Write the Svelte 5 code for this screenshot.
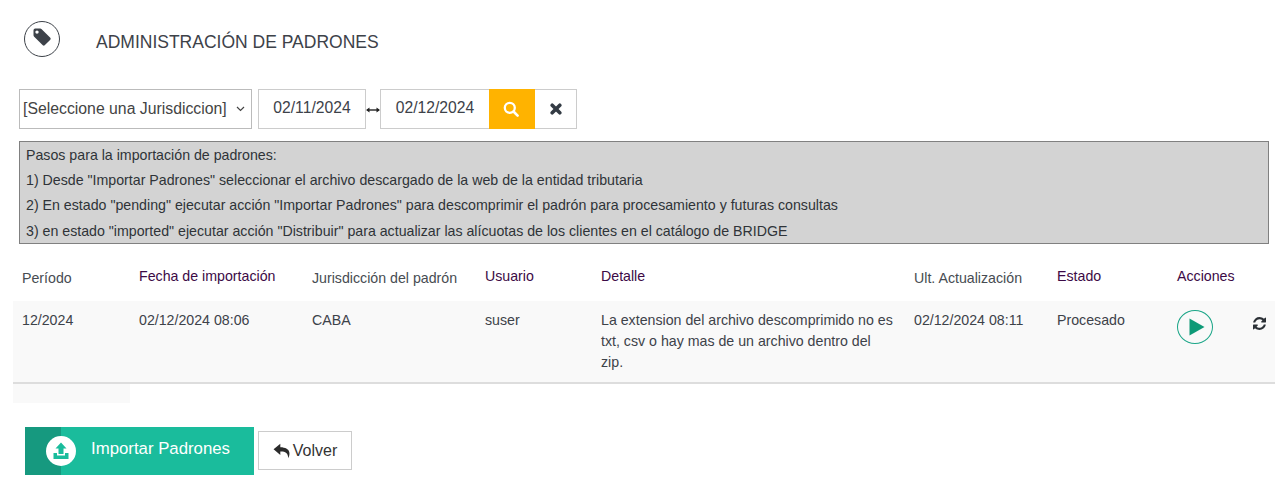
<script>
	const steps = [
		'Pasos para la importación de padrones:',
		'1) Desde "Importar Padrones" seleccionar el archivo descargado de la web de la entidad tributaria',
		'2) En estado "pending" ejecutar acción "Importar Padrones" para descomprimir el padrón para procesamiento y futuras consultas',
		'3) en estado "imported" ejecutar acción "Distribuir" para actualizar las alícuotas de los clientes en el catálogo de BRIDGE'
	];

	const columns = [
		{ label: 'Período' },
		{ label: 'Fecha de importación', link: true },
		{ label: 'Jurisdicción del padrón' },
		{ label: 'Usuario', link: true },
		{ label: 'Detalle', link: true },
		{ label: 'Ult. Actualización' },
		{ label: 'Estado', link: true },
		{ label: 'Acciones', link: true }
	];
</script>

<div class="page">
	<header class="title-bar">
		<span class="title-icon">
			<svg width="20" height="20" viewBox="0 0 20 20">
				<path d="M1.5 3.2 Q1.5 1.5 3.2 1.5 L8.2 1.5 Q9 1.5 9.7 2.2 L18.3 10.8 Q19.2 11.8 18.3 12.7 L12.7 18.3 Q11.8 19.2 10.8 18.3 L2.2 9.7 Q1.5 9 1.5 8.2 Z M5 3.4 A1.7 1.7 0 1 0 5 6.8 A1.7 1.7 0 1 0 5 3.4 Z" fill="#3d4249" fill-rule="evenodd" />
			</svg>
		</span>
		<h1>Administración de padrones</h1>
	</header>

	<div class="filters">
		<div class="select">
			<span>[Seleccione una Jurisdiccion]</span>
			<svg width="9" height="6" viewBox="0 0 9 6"><path d="M1 1 L4.5 4.5 L8 1" fill="none" stroke="#444" stroke-width="1.2" /></svg>
		</div>
		<div class="date first">02/11/2024</div>
		<svg class="range" width="14" height="6" viewBox="0 0 14 6"><path d="M1 3 H13" stroke="#222" stroke-width="1.4" /><path d="M0 3 L3.5 0.5 V5.5 Z M14 3 L10.5 0.5 V5.5 Z" fill="#222" /></svg>
		<div class="date second">02/12/2024</div>
		<button class="search" aria-label="Buscar">
			<svg width="16" height="16" viewBox="0 0 16 16"><circle cx="6.8" cy="6.8" r="5" fill="none" stroke="#fff" stroke-width="2.3" /><path d="M10.5 10.5 L14.6 14.6" stroke="#fff" stroke-width="2.6" stroke-linecap="round" /></svg>
		</button>
		<button class="clear" aria-label="Limpiar">
			<svg width="12" height="12" viewBox="0 0 12 12"><path d="M2.2 2.2 L9.8 9.8 M9.8 2.2 L2.2 9.8" stroke="#333b44" stroke-width="3.6" stroke-linecap="round" /></svg>
		</button>
	</div>

	<div class="steps">
		{#each steps as step}
			<p>{step}</p>
		{/each}
	</div>

	<div class="table">
		<div class="row head">
			{#each columns as col}
				<div class="cell" class:link={col.link}>{col.label}</div>
			{/each}
		</div>
		<div class="row body">
			<div class="cell">12/2024</div>
			<div class="cell">02/12/2024 08:06</div>
			<div class="cell">CABA</div>
			<div class="cell">suser</div>
			<div class="cell detail">La extension del archivo descomprimido no es txt, csv o hay mas de un archivo dentro del zip.</div>
			<div class="cell">02/12/2024 08:11</div>
			<div class="cell">Procesado</div>
			<div class="cell actions">
				<span class="play">
					<svg width="16" height="18" viewBox="0 0 16 18"><path d="M0.5 0.5 L15.5 9 L0.5 17.5 Z" fill="#0e9a77" /></svg>
				</span>
				<svg class="refresh" width="13" height="13" viewBox="0 0 1536 1536"><path d="M1511 928q0 5-1 7-64 268-268 434.5T764 1536q-146 0-282.5-55T238 1324l-129 129q-19 19-45 19t-45-19-19-45V960q0-26 19-45t45-19h448q26 0 45 19t19 45-19 45l-137 137q71 66 161 102t187 36q134 0 250-65t186-179q11-17 53-117 8-23 30-23h192q13 0 22.5 9.5t9.5 22.5zm25-800v448q0 26-19 45t-45 19h-448q-26 0-45-19t-19-45 19-45l138-138Q969 256 768 256q-134 0-250 65T332 500q-11 17-53 117-8 23-30 23H50q-13 0-22.5-9.5T18 608v-7q65-268 270-434.5T768 0q146 0 284 55.5T1297 212l130-129q19-19 45-19t45 19 19 45z" fill="#2b3036" /></svg>
			</div>
		</div>
		<div class="scroll-stub"></div>
	</div>

	<div class="buttons">
		<button class="import">
			<span class="import-tab"></span>
			<span class="import-icon">
				<svg width="16" height="18" viewBox="0 0 16 18">
					<path d="M8 0.5 L13.5 6.5 H10.5 V12 H5.5 V6.5 H2.5 Z" fill="#1abc9c" />
					<path d="M0.5 11 H4 V13.5 H12 V11 H15.5 V17 H0.5 Z" fill="#1abc9c" />
				</svg>
			</span>
			<span class="import-label">Importar Padrones</span>
		</button>
		<button class="back">
			<svg width="18" height="16" viewBox="0 0 16 14"><path d="M6.5 0.5 L0.5 5.5 L6.5 10.5 V7.5 C10.5 7.3 13.5 8.5 13.5 13.5 C15.5 10 16 3.8 6.5 3.6 Z" fill="#2b2b2b" /></svg>
			Volver
		</button>
	</div>
</div>

<style>
	:global(body) {
		background: #fff;
		font-family: 'Liberation Sans', Arial, sans-serif;
		color: #333b44;
	}

	.page {
		height: 500px;
		overflow: hidden;
	}

	.title-bar {
		display: flex;
		align-items: center;
		height: 80px;
		padding: 0 0 3px 24px;
		box-sizing: border-box;
	}

	.title-icon {
		display: flex;
		align-items: center;
		justify-content: center;
		width: 36px;
		height: 36px;
		box-sizing: border-box;
		border: 1px solid #3d4249;
		border-radius: 50%;
		padding: 0 0 3px 0;
	}

	h1 {
		margin: 8px 0 0 36px;
		font-size: 17.5px;
		font-weight: 400;
		text-transform: uppercase;
		color: #3d4249;
	}

	.filters {
		display: flex;
		align-items: center;
		margin: 9px 0 0 19px;
		height: 40px;
	}

	.select {
		display: flex;
		align-items: center;
		justify-content: space-between;
		width: 233px;
		height: 40px;
		box-sizing: border-box;
		border: 1px solid #bbb;
		padding: 0 6px 0 3px;
		font-size: 15.8px;
		color: #444;
	}

	.date {
		width: 108px;
		height: 40px;
		box-sizing: border-box;
		border: 1px solid #ccc;
		text-align: center;
		line-height: 36px;
		font-size: 15.7px;
		color: #3d4249;
	}

	.date.first {
		margin-left: 6px;
	}

	.date.second {
		width: 109px;
		border-right: 0;
	}

	.range {
		margin: 1px 0 0;
		width: 14px;
	}

	button {
		padding: 0;
		font-family: inherit;
		cursor: pointer;
	}

	.search,
	.clear {
		display: flex;
		align-items: center;
		justify-content: center;
		height: 40px;
	}

	.search {
		width: 46px;
		border: 0;
		background: #ffb300;
		padding-right: 2px;
	}

	.clear {
		width: 42px;
		background: #fff;
		border: 1px solid #ccc;
		border-left: 0;
	}

	.steps {
		margin: 12px 11px 0 19px;
		height: 103px;
		box-sizing: border-box;
		border: 1px solid #808080;
		background: #d3d3d3;
		padding: 1px 6px 0;
	}

	.steps p {
		margin: 0;
		height: 25.2px;
		line-height: 25px;
		font-size: 14.2px;
		color: #2f3338;
	}

	.table {
		margin: 0 5px 0 13px;
	}

	.row {
		display: grid;
		grid-template-columns: 117px 173px 173px 116px 313px 143px 120px 107px;
		padding-left: 9px;
		font-size: 14.2px;
	}

	.head {
		height: 57px;
		align-items: start;
		padding-top: 24px;
		box-sizing: border-box;
		color: #474c52;
	}

	.head .cell {
		line-height: 16px;
	}

	.head .cell:not(.link) {
		padding-top: 2px;
	}

	.head .link {
		color: #3c0a46;
	}

	.body {
		height: 83px;
		box-sizing: border-box;
		border-bottom: 2px solid #ddd;
		background: #f9f9f9;
		padding-top: 9px;
		color: #3d4249;
		line-height: 21px;
	}

	.detail {
		padding-right: 20px;
	}

	.actions {
		position: relative;
	}

	.play {
		display: flex;
		align-items: center;
		justify-content: center;
		width: 36px;
		height: 34px;
		box-sizing: border-box;
		border: 1px solid #1aa587;
		border-radius: 50%;
		padding-left: 3px;
	}

	.refresh {
		position: absolute;
		left: 76px;
		top: 7px;
	}

	.scroll-stub {
		width: 117px;
		height: 19px;
		background: #f9f9f9;
	}

	.buttons {
		display: flex;
		align-items: flex-start;
		gap: 4px;
		margin: 24px 0 0 25px;
	}

	.import {
		display: flex;
		align-items: center;
		width: 229px;
		height: 48px;
		border: 0;
		background: #1abc9c;
		color: #fff;
		font-size: 16.8px;
	}

	.import-tab {
		width: 36px;
		height: 48px;
		background: #16997f;
		flex: none;
	}

	.import-icon {
		display: flex;
		align-items: center;
		justify-content: center;
		flex: none;
		width: 30px;
		height: 30px;
		margin-left: -15px;
		border-radius: 50%;
		background: #fff;
	}

	.import-label {
		margin: 0 0 4px 15px;
	}

	.back {
		display: flex;
		align-items: center;
		justify-content: center;
		gap: 2px;
		width: 94px;
		height: 39px;
		margin-top: 4px;
		background: #fff;
		border: 1px solid #ccc;
		font-size: 16px;
		color: #333;
	}
</style>
